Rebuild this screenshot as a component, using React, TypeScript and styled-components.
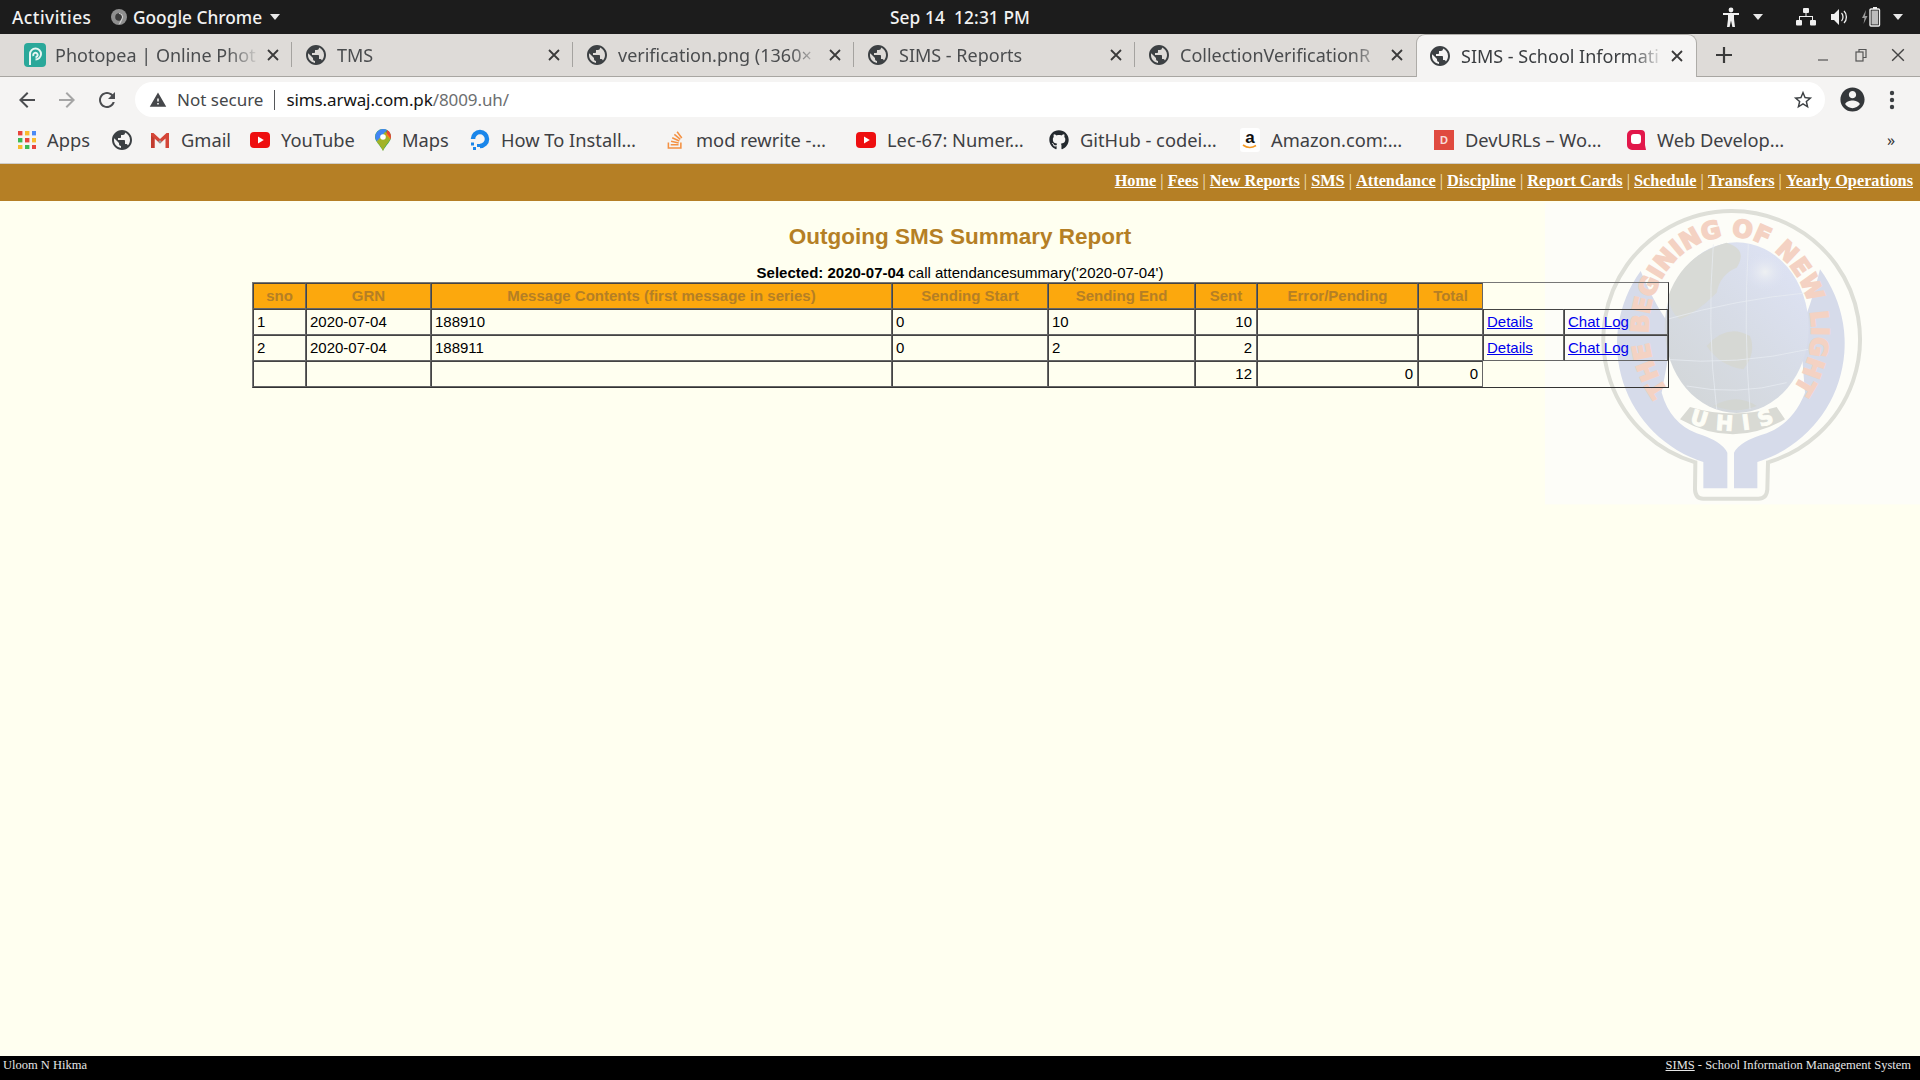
import React from "react";
import styled, { createGlobalStyle } from "styled-components";
import { FaGithub, FaStackOverflow } from "react-icons/fa";

const Global = createGlobalStyle`
  html, body { margin: 0; padding: 0; height: 100%; }
  body { background: #fffff0; overflow: hidden; }
  #root { height: 100%; }
`;

const Screen = styled.div`
  width: 1920px; height: 1080px; display: flex; flex-direction: column; overflow: hidden;
`;

/* ---------- GNOME top bar ---------- */
const SystemBar = styled.div`
  height: 34px; background: #1c1c1c; color: #f2f2f2; display: grid; grid-template-columns: 1fr auto 1fr;
  align-items: center; font: 500 17.3px "Noto Sans", sans-serif; flex: none;
`;
const SysLeft = styled.div`display: flex; align-items: center; padding-left: 12px;`;
const Activities = styled.span`width: 99px; letter-spacing: .5px;`;
const AppName = styled.span`margin: 0 8px 0 6px;`;
const Clock = styled.span`white-space: pre; letter-spacing: .1px;`;
const SysRight = styled.div`display: flex; align-items: center; justify-content: flex-end; padding-right: 17px; height: 100%;`;
const Caret = styled.i<{ $ml?: number }>`
  display: block; width: 0; height: 0; border: 5.5px solid transparent; border-top: 6px solid #e8e8e8; border-bottom: 0;
  margin-left: ${p => p.$ml ?? 0}px;
`;
const TrayGap = styled.span<{ $w: number }>`width: ${p => p.$w}px;`;

/* ---------- Tabs ---------- */
const TabStrip = styled.div`
  height: 43px; flex: none; display: flex; background: #dedbd8; border-bottom: 1px solid #a8a6a2; box-sizing: border-box; padding-left: 11px; position: relative;
`;
const Tab = styled.div<{ $active?: boolean; $last?: boolean }>`
  width: 281px; height: ${p => (p.$active ? 43 : 42)}px; box-sizing: border-box; display: flex; align-items: center; padding: 0 10px 0 ${p => (p.$active ? 11 : 12)}px;
  color: ${p => (p.$active ? "#3a3d40" : "#4a4c4e")}; font: 18px "Noto Sans", sans-serif; position: relative;
  ${p => p.$active ? `background:#f5f4f3;border:1px solid #aeaca8;border-bottom:0;border-radius:9px 9px 0 0;z-index:1;` : ""}
  ${p => p.$last ? "" : `&::after{content:"";position:absolute;right:0;top:8px;height:25px;width:1px;background:#a5a3a0;}`}
`;
const TabTitle = styled.span`
  flex: 1; margin-left: 9px; white-space: nowrap;
  mask-image: linear-gradient(to right, #000 84%, transparent 100%);
`;
const TabClose = styled.span`width: 18px; display: flex; justify-content: center; margin-left: 4px;`;
const NewTab = styled.div`margin-left: 19px; display: flex; align-items: center; height: 42px;`;
const WindowControls = styled.div`
  margin-left: auto; display: flex; align-items: center; gap: 22px; padding-right: 15px; height: 42px;
`;

/* ---------- Toolbar ---------- */
const Toolbar = styled.div`
  height: 40px; flex: none; background: #f5f4f3; display: flex; align-items: flex-end; padding-left: 15px; box-sizing: border-box; color: #4b4d50;
`;
const NavIcons = styled.div`display: flex; align-items: center; gap: 16px; height: 35px; width: 120px;`;
const Omnibox = styled.div`
  width: 1690px; height: 35px; background: #fff; border-radius: 18px; display: flex; align-items: center; padding-left: 14px; box-sizing: border-box;
  font: 17px "Noto Sans", sans-serif;
`;
const NotSecure = styled.span`margin-left: 10px; color: #45474a;`;
const Divider = styled.span`width: 1px; height: 20px; background: #55575a; margin: 0 11px;`;
const Host = styled.span`color: #141414; letter-spacing: -.1px;`;
const UrlPath = styled.span`color: #6c6e70; letter-spacing: -.1px;`;
const Star = styled.span`margin-left: auto; margin-right: 11px; display: flex;`;
const ProfileGroup = styled.div`display: flex; align-items: center; height: 35px; gap: 22px; margin-left: 13px;`;

/* ---------- Bookmarks ---------- */
const BookmarkBar = styled.div`
  height: 47px; flex: none; background: #f5f4f3; border-bottom: 1px solid #cfcdca; box-sizing: border-box; display: flex; align-items: center; padding: 0 0 1px 18px;
  font: 18.3px "Noto Sans", sans-serif; color: #3e4043;
`;
const Bookmark = styled.div<{ $w: number }>`
  width: ${p => p.$w}px; flex: none; display: flex; align-items: center; gap: 11px; white-space: nowrap;
`;
const More = styled.span`margin-left: 90px; font-size: 16px; color: #333;`;

/* ---------- Page ---------- */
const TopNav = styled.nav`
  height: 37px; flex: none; background: #b57f25; color: #f3e3c4; display: flex; justify-content: flex-end; align-items: center;
  padding: 0 7px 4px 0; box-sizing: border-box; font: 16.3px "Liberation Serif", serif; white-space: pre;
`;
const NavLink = styled.a`color: #fff; font-weight: 700; text-decoration: underline;`;
const Content = styled.main`
  flex: 1; position: relative; display: flex; flex-direction: column; align-items: center; background: #fffff0; font: 15px "Liberation Sans", sans-serif; color: #000;
`;
const Watermark = styled.svg`position: absolute; right: 0; top: -5px; width: 380px; height: 320px;`;
const Title = styled.h1`
  position: relative; margin: 22px 0 0; font: 700 22.5px/27px "Liberation Sans", sans-serif; color: #b57f25;
`;
const Selected = styled.div`position: relative; margin-top: 14px; line-height: 17px; height: 18px;`;
const Table = styled.table`
  position: relative; width: 1415px; margin-left: 1px; table-layout: fixed; border-collapse: separate; border-spacing: 0;
  border: 1px solid; border-color: #777 #333 #333 #777;
`;
const Col = styled.col<{ $w: number }>`width: ${p => p.$w}px;`;
const Th = styled.th`
  height: 22px; padding: 0 0 2px; box-sizing: content-box; background: #fca80d; color: #b57f25; font: 700 15px "Liberation Sans", sans-serif; text-align: center;
  border: 1px solid; border-color: #444 #666 #666 #444;
`;
const Td = styled.td<{ $right?: boolean }>`
  height: 23px; padding: 0 4px 1px 3px; text-align: ${p => (p.$right ? "right" : "left")};
  border: 1px solid; border-color: #444 #666 #666 #444;
`;
const RowLink = styled.a`color: #0000ee; text-decoration: underline;`;
const Footer = styled.footer`
  height: 24px; flex: none; background: #000; color: #e6e6e6; display: flex; justify-content: space-between; align-items: center;
  padding: 0 9px 6px 3px; box-sizing: border-box; font: 12.5px "Liberation Serif", serif;
`;
const FootLink = styled.a`color: #e6e6e6; text-decoration: underline;`;

/* ---------- Icons ---------- */
const M = ({ d, s = 24, c = "currentColor" }: { d: string; s?: number; c?: string }) => (
  <svg width={s} height={s} viewBox="0 0 24 24" fill={c} style={{ flex: "none", display: "block" }}><path d={d} /></svg>
);
const globeD = "M12 2C6.48 2 2 6.48 2 12s4.48 10 10 10 10-4.48 10-10S17.52 2 12 2zm-1 17.93c-3.95-.49-7-3.85-7-7.93 0-.62.08-1.21.21-1.79L9 15v1c0 1.1.9 2 2 2v1.93zm6.9-2.54c-.26-.81-1-1.39-1.9-1.39h-1v-3c0-.55-.45-1-1-1H8v-2h2c.55 0 1-.45 1-1V7h2c1.1 0 2-.9 2-2v-.41c2.93 1.19 5 4.06 5 7.41 0 2.08-.8 3.97-2.1 5.39z";
const Globe = () => <M d={globeD} s={24} c="#3c4043" />;
const X = ({ s = 12, c = "#3a3a3a", w = 1.8 }: { s?: number; c?: string; w?: number }) => (
  <svg width={s} height={s} viewBox="0 0 12 12" stroke={c} strokeWidth={w} style={{ display: "block" }}><path d="M1 1l10 10M11 1L1 11" /></svg>
);
const Photopea = () => (
  <svg width="22" height="24" viewBox="0 0 22 24" style={{ flex: "none", marginLeft: 1 }}>
    <rect width="22" height="24" rx="4" fill="#2aa89a" />
    <path d="M6 22V11a5.5 5.5 0 1 1 5.5 5.5M9.5 13a2.2 2.2 0 1 1 2 1.2" fill="none" stroke="#e8f6f3" strokeWidth="2" />
  </svg>
);
const Apps = () => (
  <svg width="18" height="18" viewBox="0 0 18 18" style={{ flex: "none" }}>
    {["#e8453c", "#f9bb2d", "#4a8af4", "#3cba54", "#e8453c", "#f9bb2d", "#f9bb2d", "#3cba54", "#e8453c"].map((c, i) => (
      <rect key={i} x={(i % 3) * 7} y={Math.floor(i / 3) * 7} width="4.4" height="4.4" fill={c} />
    ))}
  </svg>
);
const Gmail = () => (
  <svg width="20" height="16" viewBox="0 0 20 16" style={{ flex: "none" }}>
    <path d="M1 1h2.5L10 7l6.5-6H19v15h-3.5V6.5L10 11.5 4.5 6.5V16H1z" fill="#d44638" />
    <path d="M4.5 6.5V16H1V3.5z" fill="#c23b2e" /><path d="M10 11.5l-1.8-1.7L10 8l1.8 1.8z" fill="#999" />
  </svg>
);
const YouTube = () => (
  <svg width="20" height="16" viewBox="0 0 20 16" style={{ flex: "none" }}>
    <rect width="20" height="16" rx="4" fill="#ee0f10" /><path d="M8 4.5v7l5.8-3.5z" fill="#fff" />
  </svg>
);
const MapsPin = () => (
  <svg width="16" height="22" viewBox="0 0 16 22" style={{ flex: "none" }}>
    <path d="M8 0a8 8 0 0 1 8 8c0 4.5-5 8-8 14C5 16 0 12.5 0 8a8 8 0 0 1 8-8z" fill="#34a853" />
    <path d="M2 3a8 8 0 0 1 6-3 8 8 0 0 1 4 1L2 12.6A8 8 0 0 1 2 3z" fill="#4285f4" />
    <path d="M12 1a8 8 0 0 1 4 7l-.6 2.6L11 6z" fill="#ea4335" />
    <path d="M1.500 12.500l9-10 5 6.500c-.8 4-5 6-7.500 13-2-5-4.500-7-6.500-9.500z" fill="#fbbc04" opacity=".55" />
    <circle cx="8" cy="8" r="2.800" fill="#fff" />
  </svg>
);
const Ocean = () => (
  <svg width="20" height="22" viewBox="0 0 20 22" style={{ flex: "none" }}>
    <path d="M10 17a7 7 0 1 0-7-7" fill="none" stroke="#1a86ea" strokeWidth="4.500" />
    <path d="M7 15h3.500v3H7zM3 18h3v3H3zM1 13.500h3v3H1z" fill="#1a86ea" />
  </svg>
);
const Amazon = () => (
  <Az>
    <AzLetter>a</AzLetter>
    <svg width="16" height="5" viewBox="0 0 16 5" style={{ display: "block", marginTop: -3 }}>
      <path d="M1 1c4 3 9 3 13 .5" fill="none" stroke="#f59a23" strokeWidth="1.600" />
    </svg>
  </Az>
);
const Az = styled.span`width: 20px; height: 24px; background: #fff; border-radius: 3px; display: flex; flex-direction: column; align-items: center; flex: none;`;
const AzLetter = styled.span`font: 700 17px/19px "Liberation Sans", sans-serif; color: #111;`;
const DevBadge = styled.span`
  width: 20px; height: 20px; flex: none; background: #e04a3f; color: #f8dcd9; font: 700 11px/20px "Liberation Sans", sans-serif; text-align: center;
`;
const WebDev = () => (
  <svg width="20" height="20" viewBox="0 0 20 20" style={{ flex: "none" }}>
    <path d="M5 0h10a4 4 0 0 1 4 4v11l1 5h-14a5 5 0 0 1-5-5V5a5 5 0 0 1 5-5z" fill="#e2174a" />
    <rect x="5" y="4" width="10" height="10" rx="3" fill="#fff" />
  </svg>
);

const ChromeDot = () => (
  <svg width="16" height="16" viewBox="0 0 16 16" style={{ flex: "none" }}>
    <circle cx="8" cy="8" r="8" fill="#8f8f8f" /><circle cx="8" cy="8" r="3.800" fill="#3b3b3b" /><path d="M8 4.500a3.500 3.500 0 0 1 3.400 4.500L8.500 15" fill="none" stroke="#d0d0d0" strokeWidth="1.200" />
  </svg>
);
const Accessibility = () => (
  <svg width="16" height="20" viewBox="0 0 16 20" fill="#f0f0f0">
    <circle cx="8" cy="3" r="2.400" /><path d="M0 6h16v2h-5v4l1 8h-2.600L8 13.500 6.600 20H4l1-8V8H0z" />
  </svg>
);
const Network = () => (
  <svg width="20" height="18" viewBox="0 0 20 18" fill="#f0f0f0">
    <rect x="7" y="0" width="6" height="5" rx="1" /><rect x="0" y="12" width="6" height="5.500" rx="1" /><rect x="14" y="12" width="6" height="5.500" rx="1" />
    <path d="M9.500 5h1v3H17v4h-1V9H4v3H3V8h6.500z" />
  </svg>
);
const Volume = () => (
  <svg width="18" height="18" viewBox="0 0 18 18" fill="#f0f0f0">
    <path d="M0 6h3l5-5v16l-5-5H0z" /><path d="M10.500 5c2 2 2 6 0 8M13 3c3.200 3 3.200 9 0 12" fill="none" stroke="#f0f0f0" strokeWidth="1.300" />
  </svg>
);
const Battery = () => (
  <svg width="20" height="20" viewBox="0 0 20 20">
    <path d="M4 3L0 11h2.500L1.500 17 5.500 9H3z" fill="#9a9a9a" />
    <rect x="8" y="2" width="9.500" height="17" rx="1" fill="none" stroke="#f0f0f0" strokeWidth="1.400" /><rect x="11" y="0" width="4" height="2" fill="#f0f0f0" />
    <rect x="9.500" y="3.500" width="6.500" height="14" fill="#bdbdbd" />
  </svg>
);

const Logo = () => (
  <Watermark viewBox="0 0 1140 960">
    <defs>
      <linearGradient id="wmGlobe" x1="0.85" y1="0.1" x2="0.2" y2="0.9">
        <stop offset="0" stopColor="#dde2f3" />
        <stop offset="0.5" stopColor="#d7dce6" />
        <stop offset="1" stopColor="#d3d7da" />
      </linearGradient>
      <radialGradient id="wmShine">
        <stop offset="0" stopColor="#eef0f2" />
        <stop offset="1" stopColor="#dde2f3" stopOpacity="0" />
      </radialGradient>
    </defs>
    <rect x="15" y="20" width="1125" height="905" fill="#fdfdf8" />
    <path d="M466 799A385 385 0 1 1 684 799L682 880Q680 908 655 908L490 908Q466 908 465 880Z" fill="none" stroke="#dedfd8" strokeWidth="12" />
    <path d="M302 225A372 372 0 0 0 490 798L490 877L562 877L562 770Q545 735 470 712Q390 680 365 590L400 400Q350 340 302 225Z" fill="#d6dbea" />
    <path d="M840 220A372 372 0 0 1 652 798L652 877L582 877L582 770Q600 735 680 712Q760 680 795 590L780 400Q810 340 840 220Z" fill="#d6dbea" />
    <ellipse cx="590" cy="395" rx="216" ry="256" fill="url(#wmGlobe)" />
    <path d="M385 300Q430 175 560 140Q625 160 590 215Q540 235 530 290Q470 350 420 370Q390 350 385 300Z" fill="#d8dad6" />
    <path d="M500 450Q560 380 630 420Q650 470 610 520Q540 510 500 450Z" fill="#d6d8d4" />
    <path d="M520 630Q590 590 650 630Q590 655 520 630Z" fill="#d3d6d2" />
    <ellipse cx="675" cy="228" rx="65" ry="58" fill="url(#wmShine)" />
    <g fill="none" stroke="#e9ecf2" strokeWidth="2.500" opacity=".85">
      <path d="M380 370Q590 310 805 290M375 490Q590 510 805 460M440 570Q590 600 740 560M520 145Q500 400 530 640M625 145Q610 400 630 640" />
    </g>
    <path id="wmRing" d="M385 585A245 280 0 1 1 755 585" fill="none" />
    <text fontFamily="DejaVu Sans, sans-serif" fontWeight="700" fontSize="72" fill="#f4d2c3" stroke="#f4d2c3" strokeWidth="5">
      <textPath href="#wmRing" textLength="1210" lengthAdjust="spacing">THE BEGINING OF NEW LIGHT</textPath>
    </text>
    <path d="M420 670L450 633Q580 672 710 633L735 670Q580 760 420 670Z" fill="#d9dad4" />
    <path id="wmRibbon" d="M448 680Q585 730 716 674" fill="none" />
    <text fontFamily="DejaVu Sans, sans-serif" fontWeight="700" fontSize="62" fill="#fdfdf6" stroke="#fdfdf6" strokeWidth="3">
      <textPath href="#wmRibbon" textLength="262" lengthAdjust="spacing">UHIS</textPath>
    </text>
  </Watermark>
);

const tabs: { title: string; icon: React.ReactNode; active?: boolean }[] = [
  { title: "Photopea | Online Phot", icon: <Photopea /> },
  { title: "TMS", icon: <Globe /> },
  { title: "verification.png (1360×", icon: <Globe /> },
  { title: "SIMS - Reports", icon: <Globe /> },
  { title: "CollectionVerificationR", icon: <Globe /> },
  { title: "SIMS - School Informati", icon: <Globe />, active: true },
];

const bookmarks: { label: string; w: number; icon: React.ReactNode }[] = [
  { label: "Apps", w: 92, icon: <Apps /> },
  { label: "", w: 40, icon: <M d={globeD} s={24} c="#3c4043" /> },
  { label: "Gmail", w: 100, icon: <Gmail /> },
  { label: "YouTube", w: 125, icon: <YouTube /> },
  { label: "Maps", w: 95, icon: <MapsPin /> },
  { label: "How To Install…", w: 195, icon: <Ocean /> },
  { label: "mod rewrite -…", w: 191, icon: <FaStackOverflow size={20} color="#f48024" style={{ flex: "none", opacity: 0.85 }} /> },
  { label: "Lec-67: Numer…", w: 193, icon: <YouTube /> },
  { label: "GitHub - codei…", w: 191, icon: <FaGithub size={20} color="#24292e" style={{ flex: "none" }} /> },
  { label: "Amazon.com:…", w: 194, icon: <Amazon /> },
  { label: "DevURLs – Wo…", w: 192, icon: <DevBadge>D</DevBadge> },
  { label: "Web Develop…", w: 171, icon: <WebDev /> },
];

const navItems = ["Home", "Fees", "New Reports", "SMS", "Attendance", "Discipline", "Report Cards", "Schedule", "Transfers", "Yearly Operations"];
const headers = ["sno", "GRN", "Message Contents (first message in series)", "Sending Start", "Sending End", "Sent", "Error/Pending", "Total"];
const widths = [53, 125, 461, 156, 147, 62, 161, 65, 81, 104];
const rows = [
  { n: "1", g: "2020-07-04", m: "188910", s: "0", e: "10", t: "10" },
  { n: "2", g: "2020-07-04", m: "188911", s: "0", e: "2", t: "2" },
];

export default function App() {
  return (
    <Screen>
      <Global />
      <SystemBar>
        <SysLeft>
          <Activities>Activities</Activities>
          <ChromeDot />
          <AppName>Google Chrome</AppName>
          <Caret />
        </SysLeft>
        <Clock>Sep 14  12:31 PM</Clock>
        <SysRight>
          <Accessibility />
          <Caret $ml={14} />
          <TrayGap $w={33} />
          <Network />
          <TrayGap $w={15} />
          <Volume />
          <TrayGap $w={13} />
          <Battery />
          <Caret $ml={11} />
        </SysRight>
      </SystemBar>

      <TabStrip>
        {tabs.map((t, i) => (
          <Tab key={t.title} $active={t.active} $last={i >= 4}>
            {t.icon}
            <TabTitle>{t.title}</TabTitle>
            <TabClose><X /></TabClose>
          </Tab>
        ))}
        <NewTab>
          <svg width="16" height="16" viewBox="0 0 16 16" stroke="#3a3a3a" strokeWidth="2.200"><path d="M8 0v16M0 8h16" /></svg>
        </NewTab>
        <WindowControls>
          <svg width="16" height="16" viewBox="0 0 16 16" stroke="#555" strokeWidth="1.200"><path d="M3 13h10" /></svg>
          <svg width="16" height="16" viewBox="0 0 16 16" fill="none" stroke="#555" strokeWidth="1.200"><rect x="3" y="5" width="7" height="9" /><path d="M6 5V2.500h7v8h-3" /></svg>
          <X s={14} c="#444" w={1.200} />
        </WindowControls>
      </TabStrip>

      <Toolbar>
        <NavIcons>
          <M d="M20 11H7.830l5.590-5.590L12 4l-8 8 8 8 1.410-1.410L7.830 13H20v-2z" />
          <M d="M12 4l-1.410 1.410L16.170 11H4v2h12.170l-5.580 5.590L12 20l8-8z" c="#a5a5a5" />
          <M d="M17.650 6.350C16.200 4.900 14.210 4 12 4c-4.420 0-7.990 3.580-7.990 8s3.570 8 7.990 8c3.730 0 6.840-2.550 7.730-6h-2.080c-.82 2.330-3.040 4-5.650 4-3.310 0-6-2.690-6-6s2.690-6 6-6c1.660 0 3.140.69 4.220 1.780L13 11h7V4l-2.350 2.350z" />
        </NavIcons>
        <Omnibox>
          <M d="M1 21h22L12 2 1 21zm12-3h-2v-2h2v2zm0-4h-2v-4h2v4z" s={18} c="#45474a" />
          <NotSecure>Not secure</NotSecure>
          <Divider />
          <Host>sims.arwaj.com.pk</Host><UrlPath>/8009.uh/</UrlPath>
          <Star><M d="M22 9.240l-7.190-.62L12 2 9.190 8.630 2 9.240l5.460 4.730L5.820 21 12 17.270 18.180 21l-1.630-7.030L22 9.240zM12 15.400l-3.760 2.270 1-4.280-3.320-2.880 4.380-.38L12 6.100l1.710 4.040 4.380.38-3.320 2.880 1 4.280L12 15.400z" s={22} c="#3c4043" /></Star>
        </Omnibox>
        <ProfileGroup>
          <M d="M12 2C6.480 2 2 6.480 2 12s4.480 10 10 10 10-4.480 10-10S17.520 2 12 2zm0 3c1.660 0 3 1.340 3 3s-1.340 3-3 3-3-1.340-3-3 1.340-3 3-3zm0 14.200c-2.500 0-4.710-1.280-6-3.220.03-1.990 4-3.080 6-3.080 1.990 0 5.970 1.090 6 3.080-1.290 1.940-3.500 3.220-6 3.220z" s={29} c="#34373a" />
          <svg width="6" height="20" viewBox="0 0 6 20" fill="#3c4043"><circle cx="3" cy="3" r="2.200" /><circle cx="3" cy="10" r="2.200" /><circle cx="3" cy="17" r="2.200" /></svg>
        </ProfileGroup>
      </Toolbar>

      <BookmarkBar>
        {bookmarks.map((b, i) => (
          <Bookmark key={i} $w={b.w}>{b.icon}{b.label && <span>{b.label}</span>}</Bookmark>
        ))}
        <More>»</More>
      </BookmarkBar>

      <TopNav>
        {navItems.map((n, i) => (
          <React.Fragment key={n}>
            {i > 0 && " | "}
            <NavLink href="#">{n}</NavLink>
          </React.Fragment>
        ))}
      </TopNav>

      <Content>
        <Logo />
        <Title>Outgoing SMS Summary Report</Title>
        <Selected><b>Selected: 2020-07-04</b> call attendancesummary('2020-07-04')</Selected>
        <Table>
          <colgroup>{widths.map((w, i) => <Col key={i} $w={w} />)}</colgroup>
          <tbody>
            <tr>{headers.map(h => <Th key={h}>{h}</Th>)}</tr>
            {rows.map(r => (
              <tr key={r.n}>
                <Td>{r.n}</Td><Td>{r.g}</Td><Td>{r.m}</Td><Td>{r.s}</Td><Td>{r.e}</Td>
                <Td $right>{r.t}</Td><Td /><Td />
                <Td><RowLink href="#">Details</RowLink></Td>
                <Td><RowLink href="#">Chat Log</RowLink></Td>
              </tr>
            ))}
            <tr>
              <Td /><Td /><Td /><Td /><Td />
              <Td $right>12</Td><Td $right>0</Td><Td $right>0</Td>
            </tr>
          </tbody>
        </Table>
      </Content>

      <Footer>
        <span>Uloom N Hikma</span>
        <span><FootLink href="#">SIMS</FootLink> - School Information Management System</span>
      </Footer>
    </Screen>
  );
}
